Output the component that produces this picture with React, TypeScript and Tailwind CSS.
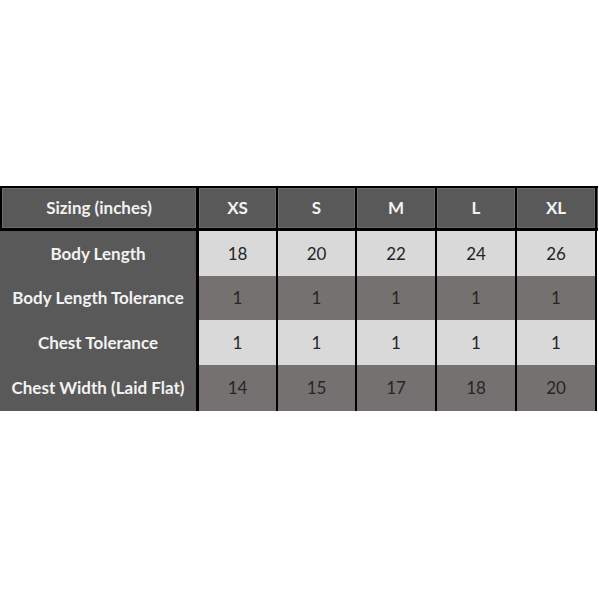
const sizes = ["XS", "S", "M", "L", "XL"];
const widths = ["w-[79px]", "w-[79px]", "w-[80px]", "w-[80px]", "w-[80px]"];

const rows = [
  { label: "Body Length", values: ["18", "20", "22", "24", "26"], light: true, h: "h-[45px]" },
  { label: "Body Length Tolerance", values: ["1", "1", "1", "1", "1"], light: false, h: "h-[44px]" },
  { label: "Chest Tolerance", values: ["1", "1", "1", "1", "1"], light: true, h: "h-[45px]" },
  { label: "Chest Width (Laid Flat)", values: ["14", "15", "17", "18", "20"], light: false, h: "h-[46px]" },
];

export default function App() {
  return (
    <div className="h-[599px] w-[599px] bg-white pt-[186px] font-['Lato',sans-serif]">
      <div className="w-[598px]">
        <div className="flex h-[45px] border-y-2 border-b-[3px] border-l-2 border-black bg-[#595959] text-[17px] font-bold text-[#f2f2f2]">
          <div className="flex w-[197px] items-center justify-center border-r-[3px] border-black shadow-[inset_0_0_0_1px_#6b6b6b]">
            Sizing (inches)
          </div>
          {sizes.map((s, i) => (
            <div
              key={s}
              className={`flex ${widths[i]} items-center justify-center border-r-2 border-black shadow-[inset_0_0_0_1px_#6b6b6b]`}
            >
              {s}
            </div>
          ))}
        </div>
        {rows.map((r) => (
          <div key={r.label} className={`flex ${r.h}`}>
            <div className="flex w-[199px] items-center justify-center border-r-[3px] border-black bg-[#595959] text-[17px] font-bold text-[#f2f2f2]">
              {r.label}
            </div>
            {r.values.map((v, i) => (
              <div
                key={i}
                className={`flex ${widths[i]} items-center justify-center border-r-2 border-black text-[17px] text-[#262626] ${
                  r.light ? "bg-[#d9d9d9]" : "bg-[#767171]"
                }`}
              >
                {v}
              </div>
            ))}
          </div>
        ))}
      </div>
    </div>
  );
}
